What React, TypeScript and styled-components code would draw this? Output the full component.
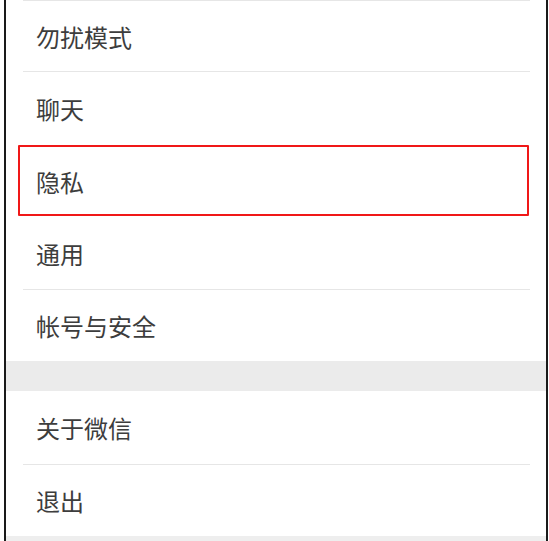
import React from "react";
import styled, { createGlobalStyle, css } from "styled-components";

const GlobalStyle = createGlobalStyle`
  html, body {
    margin: 0;
    padding: 0;
    background: #ffffff;
  }
  body {
    font-family: "Noto Sans CJK SC", "Noto Sans", sans-serif;
  }
`;

const Frame = styled.div`
  box-sizing: border-box;
  margin-left: 4px;
  width: 544px;
  height: 541px;
  border-left: 2px solid #1a1a1a;
  border-right: 2px solid #1a1a1a;
  background: #eeeeee;
  display: flex;
  flex-direction: column;
  overflow: hidden;
`;

const Group = styled.div`
  background: #ffffff;
  display: flex;
  flex-direction: column;
`;

const Spacer = styled.div`
  height: 30px;
  background: #ebebeb;
  flex-shrink: 0;
`;

const Divider = styled.div<{ $hidden?: boolean }>`
  height: 1px;
  margin: 0 16px 0 17px;
  background: ${(p) => (p.$hidden ? "transparent" : "#e6e6e6")};
  flex-shrink: 0;
`;

const Row = styled.div<{ $height: number; $selected?: boolean }>`
  position: relative;
  height: ${(p) => p.$height}px;
  display: flex;
  align-items: center;
  padding-left: 30px;
  font-size: 24px;
  color: #3d3d3d;
  flex-shrink: 0;
  ${(p) =>
    p.$selected &&
    css`
      &::after {
        content: "";
        position: absolute;
        left: 12px;
        right: 17px;
        top: 0px;
        bottom: 1px;
        border: 2px solid #f01818;
        border-radius: 1px;
        pointer-events: none;
      }
    `}
`;

type Item = { label: string; height: number; selected?: boolean };

const groupA: Item[] = [
  { label: "勿扰模式", height: 70 },
  { label: "聊天", height: 72 },
  { label: "隐私", height: 72, selected: true },
  { label: "通用", height: 71 },
  { label: "帐号与安全", height: 71 },
];

const groupB: Item[] = [
  { label: "关于微信", height: 73 },
  { label: "退出", height: 71 },
];

function renderGroup(items: Item[], topDivider: boolean) {
  const out: React.ReactNode[] = [];
  if (topDivider) out.push(<Divider key="top" />);
  items.forEach((it, i) => {
    out.push(
      <Row key={it.label} $height={it.height} $selected={it.selected}>
        {it.label}
      </Row>
    );
    if (i < items.length - 1) {
      const hide = it.selected || items[i + 1].selected;
      out.push(<Divider key={`d${i}`} $hidden={hide} />);
    }
  });
  return out;
}

export default function App() {
  return (
    <>
      <GlobalStyle />
      <Frame>
        <Group>{renderGroup(groupA, true)}</Group>
        <Spacer />
        <Group>{renderGroup(groupB, false)}</Group>
      </Frame>
    </>
  );
}
